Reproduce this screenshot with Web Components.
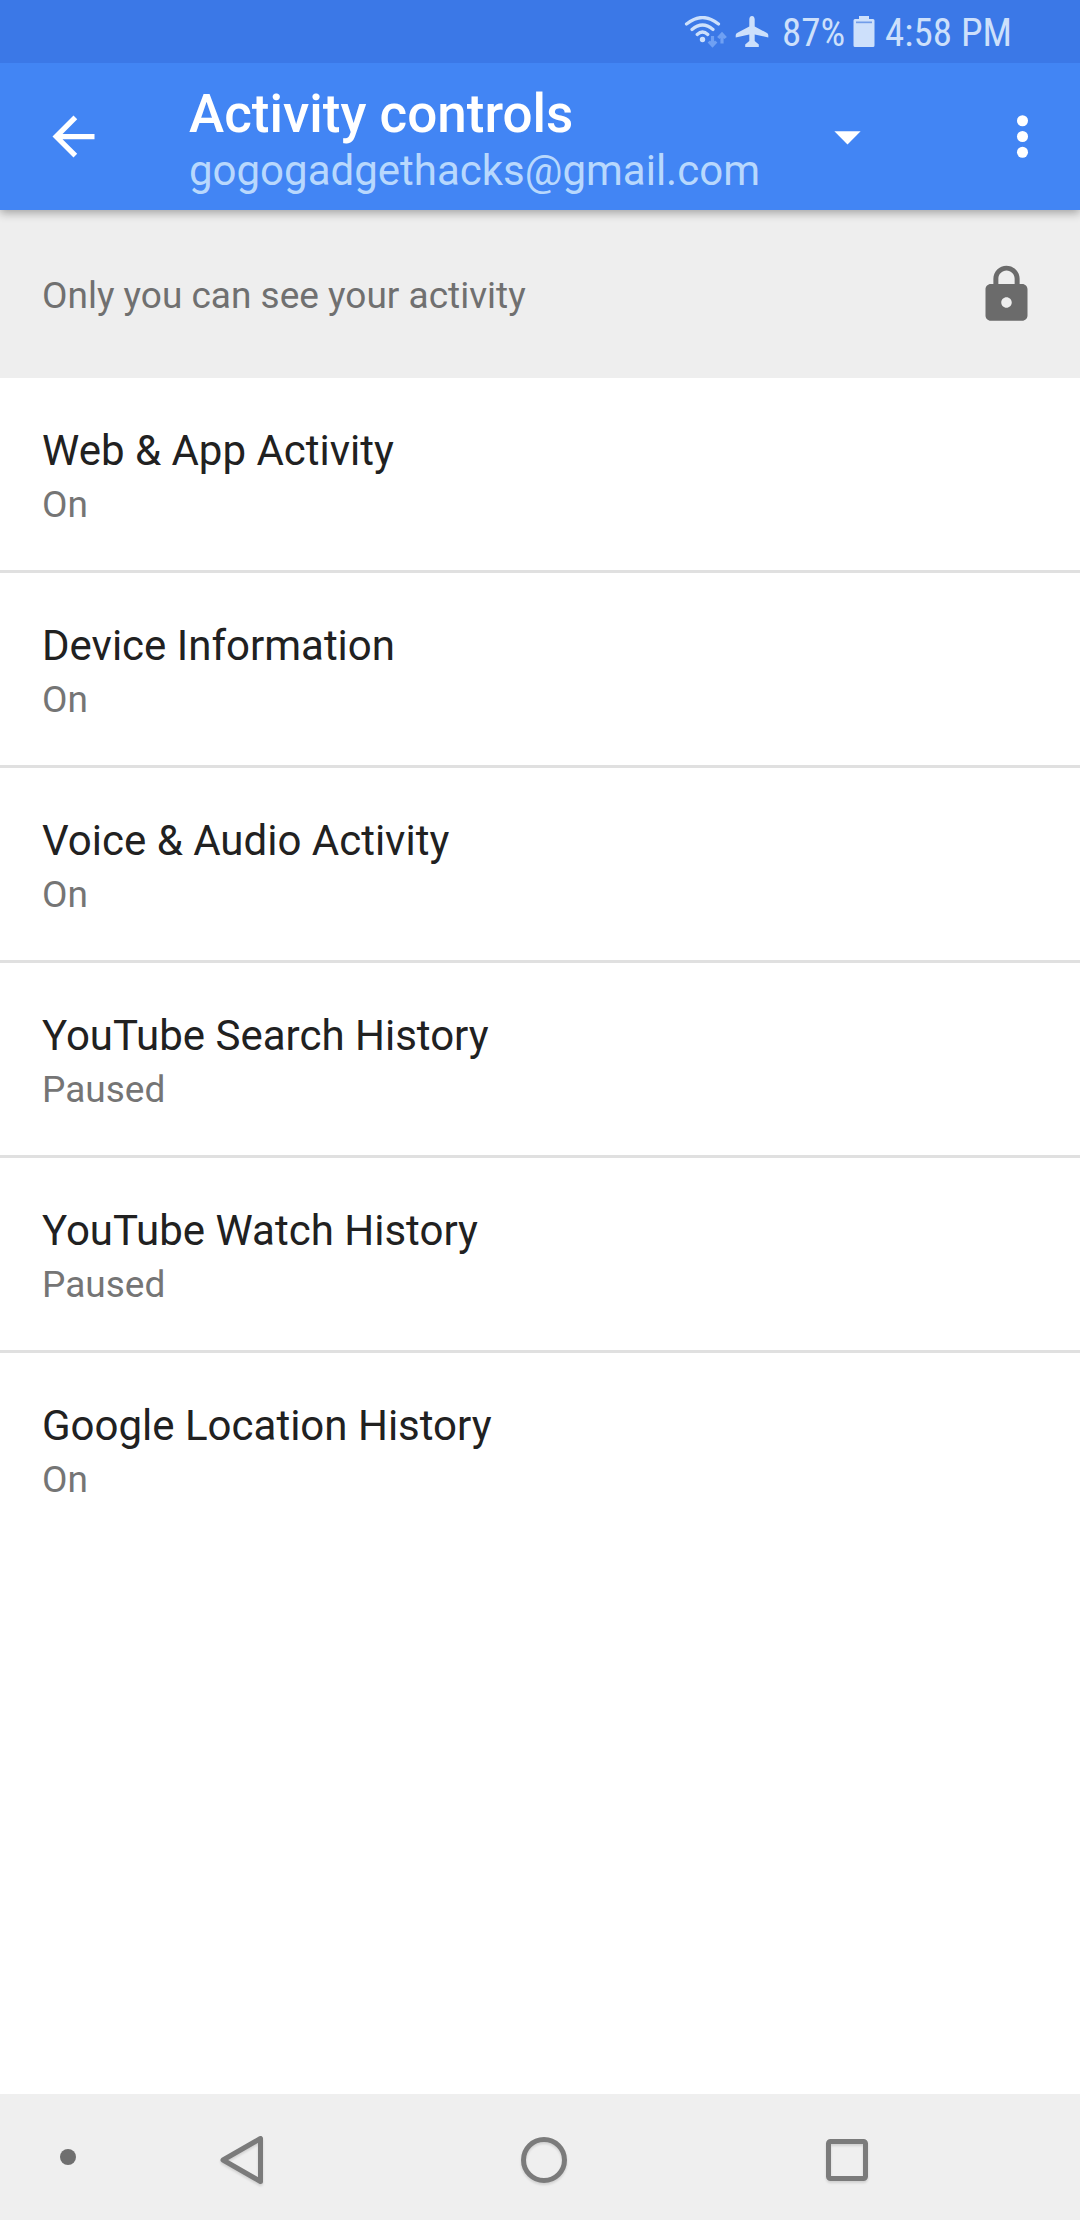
<!DOCTYPE html>
<html lang="en">
<head>
<meta charset="utf-8">
<meta name="viewport" content="width=device-width, initial-scale=1">
<title>Activity controls</title>
<style>
  html, body { height: 100%; }
  body { margin: 0; background: #fff; font-family: Roboto, "Noto Sans", sans-serif; }
</style>
</head>
<body>
<activity-screen>
  <status-bar slot="top" battery="87%" time="4:58 PM"></status-bar>
  <app-bar slot="top">
    <span slot="title">Activity controls</span>
    <span slot="account">gogogadgethacks@gmail.com</span>
  </app-bar>
  <privacy-banner>Only you can see your activity</privacy-banner>
  <setting-row>Web &amp; App Activity<span slot="state">On</span></setting-row>
  <setting-row>Device Information<span slot="state">On</span></setting-row>
  <setting-row>Voice &amp; Audio Activity<span slot="state">On</span></setting-row>
  <setting-row>YouTube Search History<span slot="state">Paused</span></setting-row>
  <setting-row>YouTube Watch History<span slot="state">Paused</span></setting-row>
  <setting-row>Google Location History<span slot="state">On</span></setting-row>
  <system-nav slot="bottom"></system-nav>
</activity-screen>

<script>
const define = (name, html) => customElements.define(name, class extends HTMLElement {
  constructor() {
    super();
    this.attachShadow({ mode: 'open' }).innerHTML = html;
  }
  connectedCallback() {
    for (const el of this.shadowRoot.querySelectorAll('[data-attr]')) {
      el.textContent = this.getAttribute(el.dataset.attr);
    }
  }
});

const reset = `
  :host, * { box-sizing: border-box; }
  svg { display: block; flex: none; }
  button { margin: 0; padding: 0; border: 0; background: none; color: inherit; font: inherit; text-align: start; cursor: pointer; }
`;

define('activity-screen', `
  <style>${reset}
    :host { display: flex; flex-direction: column; min-height: 100vh; }
    main { flex: 1; display: flex; flex-direction: column; }
    header { position: relative; z-index: 1; box-shadow: 0 3px 9px rgba(0, 0, 0, .32); }
  </style>
  <header><slot name="top"></slot></header>
  <main><slot></slot></main>
  <slot name="bottom"></slot>
`);

define('status-bar', `
  <style>${reset}
    :host { display: flex; align-items: center; justify-content: flex-end; height: 63px; padding: 2px 68px 0 0; background: #3b78e7; color: #cde0fb; font-family: "Roboto Condensed", Roboto, sans-serif; font-size: 39px; line-height: 46px; white-space: nowrap; }
    .plane { margin: 0 13px 0 7px; }
    .battery { margin: 0 10px 0 8px; }
  </style>
  <svg width="44" height="34" viewBox="0 0 44 34" fill="none" stroke="#cde0fb" stroke-width="3.200" role="img" aria-label="Wi-Fi">
    <path d="M2.500 8Q18.500 -5 34.500 8M8 13.500Q18.500 4.500 29 13.500M13.200 18.500Q18.500 13.500 23.800 18.500" stroke-linecap="round"/>
    <circle cx="18.500" cy="23.500" r="2.700" fill="#cde0fb" stroke="none"/>
    <path d="M28.500 20V29M24.800 25.500L28.500 29.500L32.200 25.500M38 27.500V18.500M34.300 22L38 18L41.700 22" stroke="#6fa0f3"/>
  </svg>
  <svg class="plane" width="34" height="34" viewBox="0 0 34 34" fill="#cde0fb" role="img" aria-label="Airplane mode">
    <path d="M17 0C18.800 0 19.700 1.600 19.700 3.500V10.500L32 17Q33.300 17.800 33.300 19.300V21.500L19.700 18.500V25L23.800 28.500V31H10.200V28.500L14.300 25V18.500L.7 21.500V19.300Q.7 17.800 2 17L14.300 10.500V3.500C14.300 1.600 15.200 0 17 0Z"/>
  </svg>
  <span data-attr="battery"></span>
  <svg class="battery" width="22" height="34" viewBox="0 0 22 34" fill="#cde0fb" role="img" aria-label="Battery">
    <path d="M6 0H16V3H20Q21.500 3 21.500 4.500V29.500Q21.500 31 20 31H2Q.5 31 .5 29.500V4.500Q.5 3 2 3H6Z"/>
    <path d="M3 5.500H19V7.200H3Z" fill="#719de9"/>
  </svg>
  <span data-attr="time"></span>
`);

define('app-bar', `
  <style>${reset}
    :host { display: flex; align-items: center; height: 147px; padding: 0 26px 0 42px; background: #4285f4; color: #fff; }
    .text { flex: 1; min-width: 0; padding: 5px 0 0 84px; }
    h1 { margin: 0; font-size: 53px; line-height: 64px; font-weight: 500; }
    p { margin: 0; font-size: 42px; line-height: 50px; color: #b8d8fd; }
    .more { margin-left: 112px; }
  </style>
  <button aria-label="Back"><svg width="63" height="63" viewBox="0 0 24 24" fill="#fff"><path d="M20 11H7.830l5.590-5.590L12 4l-8 8 8 8 1.410-1.410L7.830 13H20v-2z"/></svg></button>
  <div class="text"><h1><slot name="title"></slot></h1><p><slot name="account"></slot></p></div>
  <button aria-label="Switch account"><svg width="63" height="63" viewBox="0 0 24 24" fill="#fff"><path d="M7 10l5 5 5-5z"/></svg></button>
  <button class="more" aria-label="More options"><svg width="63" height="63" viewBox="0 0 24 24" fill="#fff"><circle cx="12" cy="6" r="2.100"/><circle cx="12" cy="12" r="2.100"/><circle cx="12" cy="18" r="2.100"/></svg></button>
`);

define('privacy-banner', `
  <style>${reset}
    :host { display: flex; align-items: center; justify-content: space-between; height: 168px; padding: 0 42px; background: #eee; color: #707070; font-size: 37px; line-height: 50px; }
    span { padding-top: 4px; }
  </style>
  <span><slot></slot></span>
  <svg width="63" height="63" viewBox="0 0 24 24" fill="#6b6b6b" role="img" aria-label="Private"><path d="M18 8h-1V6c0-2.760-2.240-5-5-5S7 3.240 7 6v2H6c-1.100 0-2 .9-2 2v10c0 1.100.9 2 2 2h12c1.100 0 2-.9 2-2V10c0-1.100-.9-2-2-2zm-6 9c-1.100 0-2-.9-2-2s.9-2 2-2 2 .9 2 2-.9 2-2 2zm3.100-9H8.900V6c0-1.710 1.390-3.100 3.100-3.100s3.100 1.390 3.100 3.100v2z"/></svg>
`);

define('setting-row', `
  <style>${reset}
    :host { display: block; border-bottom: 3px solid #e0e0e0; }
    :host(:last-of-type) { border-bottom: 0; }
    button { display: flex; flex-direction: column; width: 100%; padding: 44px 42px 40px; }
    .name { font-size: 42px; line-height: 58px; color: #212121; }
    .state { font-size: 37px; line-height: 50px; color: #757575; }
  </style>
  <button><span class="name"><slot></slot></span><span class="state"><slot name="state"></slot></span></button>
`);

define('system-nav', `
  <style>${reset}
    :host { display: grid; grid-template-columns: 136fr 212fr 392fr 214fr 126fr; height: 126px; background: #efefef; }
    button { display: grid; place-items: center; padding-top: 6px; }
    svg { filter: drop-shadow(0 2px 1px rgba(0, 0, 0, .12)); }
    .hide { padding-top: 0; }
    .hide svg { filter: none; }
  </style>
  <button class="hide" aria-label="Hide navigation bar"><svg width="16" height="16" viewBox="0 0 16 16"><circle cx="8" cy="8" r="8" fill="#6f6f6f"/></svg></button>
  <button aria-label="Back"><svg width="52" height="52" viewBox="0 0 52 52" fill="none" stroke="#7b7b7b" stroke-width="5" stroke-linejoin="round"><path d="M44.500 4.500V47.500L7 26Z"/></svg></button>
  <button aria-label="Home"><svg width="52" height="52" viewBox="0 0 52 52" fill="none" stroke="#7b7b7b" stroke-width="5"><circle cx="26" cy="26" r="20.500"/></svg></button>
  <button aria-label="Recent apps"><svg width="52" height="52" viewBox="0 0 52 52" fill="none" stroke="#7b7b7b" stroke-width="5"><rect x="7.500" y="7.500" width="37" height="37" rx="2"/></svg></button>
`);
</script>
</body>
</html>
